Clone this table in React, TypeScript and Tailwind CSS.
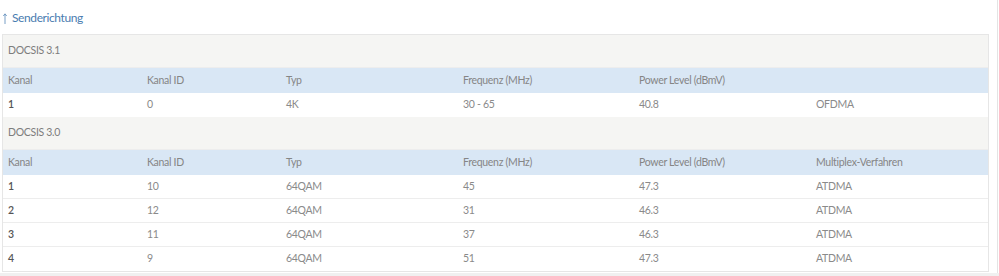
import React from "react";

interface Row {
  kanal: string;
  id: string;
  typ: string;
  freq: string;
  power: string;
  mux: string;
}

const cols = "grid grid-cols-[139px_139px_177px_176px_177px_1fr]";

const docsis31: Row[] = [
  { kanal: "1", id: "0", typ: "4K", freq: "30 - 65", power: "40.8", mux: "OFDMA" },
];

const docsis30: Row[] = [
  { kanal: "1", id: "10", typ: "64QAM", freq: "45", power: "47.3", mux: "ATDMA" },
  { kanal: "2", id: "12", typ: "64QAM", freq: "31", power: "46.3", mux: "ATDMA" },
  { kanal: "3", id: "11", typ: "64QAM", freq: "37", power: "46.3", mux: "ATDMA" },
  { kanal: "4", id: "9", typ: "64QAM", freq: "51", power: "47.3", mux: "ATDMA" },
];

const Group: React.FC<{ title: string; rows: Row[]; lastHeader: string }> = ({
  title,
  rows,
  lastHeader,
}) => (
  <>
    <div className="h-[33px] flex items-center pl-[5px] bg-[#f5f5f3] text-[#7d7d7d] border-b border-[#ededed]">
      {title}
    </div>
    <div className={`${cols} h-[25px] items-center bg-[#d9e7f5] text-[#858585] pl-[5px]`}>
      <div>Kanal</div>
      <div>Kanal ID</div>
      <div>Typ</div>
      <div>Frequenz (MHz)</div>
      <div>Power Level (dBmV)</div>
      <div>{lastHeader}</div>
    </div>
    {rows.map((r, i) => (
      <div
        key={i}
        className={`${cols} h-[24px] items-center pl-[5px] text-[#8a8a8a] bg-white ${
          i < rows.length - 1 ? "border-b border-[#ededed]" : ""
        }`}
      >
        <div className="font-semibold text-[#555]">{r.kanal}</div>
        <div>{r.id}</div>
        <div>{r.typ}</div>
        <div>{r.freq}</div>
        <div>{r.power}</div>
        <div>{r.mux}</div>
      </div>
    ))}
  </>
);

export default function App() {
  return (
    <div className="w-[999px] h-[276px] bg-white font-['Lato','Liberation_Sans',sans-serif] text-[10.5px] tracking-[-0.3px] relative overflow-hidden">
      <div className="h-[34px] pl-[3px] pt-[9px] flex items-start gap-[5px] text-[12px] tracking-[-0.4px] text-[#4a7cb0] leading-[18px]">
        <svg width="4" height="11" viewBox="0 0 4 11" className="mt-[4px]">
          <path d="M2 11V1M0.3 3L2 0.8 3.7 3" stroke="#6a94c0" strokeWidth="0.9" fill="none" />
        </svg>
        <span>Senderichtung</span>
      </div>
      <div className="ml-[2px] w-[987px] border border-[#e6e6e6]">
        <Group title="DOCSIS 3.1" rows={docsis31} lastHeader="" />
        <Group title="DOCSIS 3.0" rows={docsis30} lastHeader="Multiplex-Verfahren" />
      </div>
      <div className="absolute right-[1px] top-0 bottom-0 w-px bg-[#e4e4e4]" />
      <div className="absolute left-0 right-0 bottom-0 h-[3px] bg-[#f0f0f0]" />
    </div>
  );
}
